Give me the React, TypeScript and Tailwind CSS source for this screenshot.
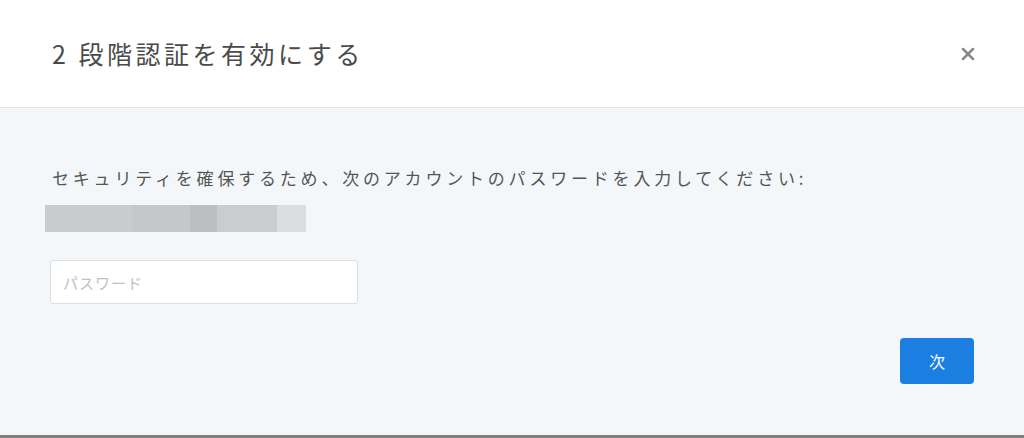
import { X } from "lucide-react";

const BLUR_SEGMENTS = [
  { width: "w-[87px]", color: "bg-[#c9cbcc]" },
  { width: "w-[58px]", color: "bg-[#c6c7c8]" },
  { width: "w-[27px]", color: "bg-[#bdbec0]" },
  { width: "w-[60px]", color: "bg-[#cbcccd]" },
  { width: "w-[29px]", color: "bg-[#dcdddf]" },
];

const font = { fontFamily: '"Noto Sans CJK JP", "Noto Sans", sans-serif' };

export default function App() {
  return (
    <div className="flex h-[438px] w-[1024px] flex-col bg-white" style={font}>
      <header className="flex h-[108px] shrink-0 items-center justify-between border-b border-[#e3e6e9] pl-[52px] pr-[46px]">
        <h1 className="text-[25px] font-normal tracking-[3.5px] text-[#4a4a4a]">2 段階認証を有効にする</h1>
        <button className="text-[#888]" aria-label="close">
          <X size={20} strokeWidth={3} />
        </button>
      </header>

      <main className="flex flex-1 flex-col bg-[#f4f7fa] px-[50px] pt-[58px]">
        <p className="pl-[2px] text-[17px] leading-6 tracking-[3.8px] text-[#555]">
          セキュリティを確保するため、次のアカウントのパスワードを入力してください:
        </p>

        <div className="-ml-[5px] mt-[15px] flex h-[27px]">
          {BLUR_SEGMENTS.map((s, i) => (
            <div key={i} className={`${s.width} ${s.color} h-full`} />
          ))}
        </div>

        <input
          type="password"
          placeholder="パスワード"
          className="mt-[28px] h-[44px] w-[308px] rounded-[3px] border border-[#dcdfe2] bg-white px-[12px] text-[15px] tracking-[1px] placeholder:text-[#c2c2c2]"
          style={font}
        />

        <div className="mt-[34px] flex justify-end">
          <button className="h-[46px] w-[74px] rounded-[4px] bg-[#1a7fe0] text-[16px] text-white">次</button>
        </div>
      </main>

      <div className="h-[3px] shrink-0 bg-[#7f7f7f]" />
    </div>
  );
}
